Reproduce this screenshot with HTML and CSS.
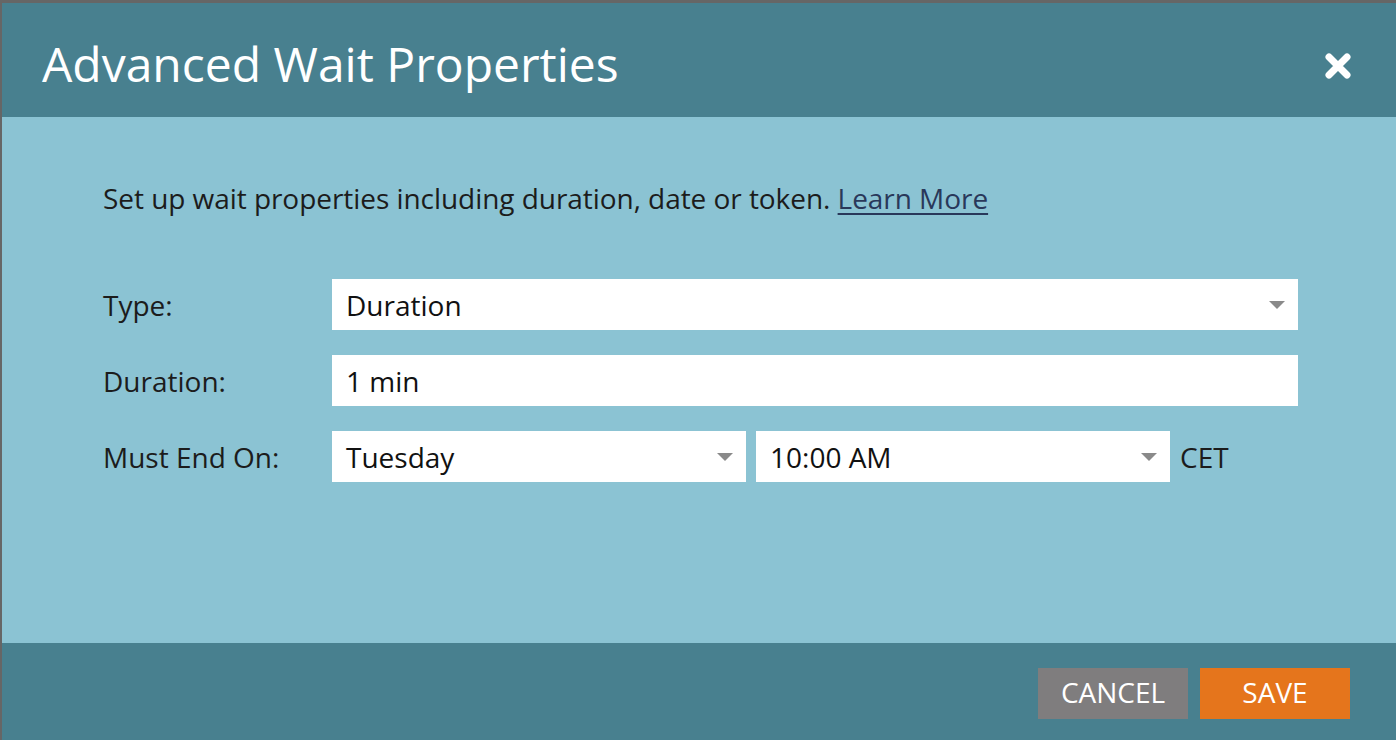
FILE: index.html
```html
<!DOCTYPE html>
<html>
<head>
<meta charset="utf-8">
<link rel="stylesheet" href="styles.css">
</head>
<body>
<div class="dialog">
  <header class="header">
    <h1 class="title">Advanced Wait Properties</h1>
    <button class="close" aria-label="Close">
      <svg width="30" height="30" viewBox="0 0 30 30"><path d="M6 6 L24 24 M24 6 L6 24" stroke="#fff" stroke-width="7" stroke-linecap="round"/></svg>
    </button>
  </header>
  <main class="body">
    <p class="intro">Set up wait properties including duration, date or token. <a href="#" class="link">Learn More</a></p>
    <div class="form">
      <div class="row">
        <label class="label">Type:</label>
        <div class="field select wide"><span>Duration</span><i class="arrow"></i></div>
      </div>
      <div class="row">
        <label class="label">Duration:</label>
        <div class="field wide"><span>1 min</span></div>
      </div>
      <div class="row">
        <label class="label">Must End On:</label>
        <div class="field select half"><span>Tuesday</span><i class="arrow"></i></div>
        <div class="field select half"><span>10:00 AM</span><i class="arrow"></i></div>
        <span class="tz">CET</span>
      </div>
    </div>
  </main>
  <footer class="footer">
    <button class="btn cancel">CANCEL</button>
    <button class="btn save">SAVE</button>
  </footer>
</div>
</body>
</html>
```
FILE: styles.css
```css
html, body { margin: 0; padding: 0; }
body {
  background: #666666;
  width: 1396px;
  height: 740px;
  overflow: hidden;
  font-family: "Open Sans", "Noto Sans", sans-serif;
}
.dialog {
  margin: 3px 0 0 2px;
  height: 737px;
  display: flex;
  flex-direction: column;
  background: #8bc3d3;
}
.header {
  height: 114px;
  background: #48808f;
  display: flex;
  align-items: center;
  justify-content: space-between;
  padding: 6px 43px 0 40px;
  box-sizing: border-box;
}
.title {
  margin: 0;
  font-weight: 400;
  font-size: 48px;
  color: #ffffff;
}
.close {
  background: none;
  border: 0;
  padding: 0;
  width: 30px;
  height: 30px;
  display: flex;
  margin-top: 6px;
}
.body {
  flex: 1;
  padding: 62px 98px 0 101px;
  box-sizing: border-box;
}
.intro {
  margin: 0 0 62px 0;
  font-size: 28px;
  color: #1c1c1c;
  line-height: 38px;
  letter-spacing: -0.05px;
}
.link {
  color: #29385a;
  text-decoration: underline;
  text-decoration-thickness: 2px;
  text-underline-offset: 4px;
}
.form {
  display: flex;
  flex-direction: column;
  gap: 25px;
}
.row {
  display: flex;
  align-items: center;
  gap: 10px;
}
.label {
  width: 219px;
  font-size: 28px;
  color: #1c1c1c;
}
.field {
  height: 51px;
  background: #ffffff;
  display: flex;
  align-items: center;
  justify-content: space-between;
  padding: 0 13px 0 14px;
  box-sizing: border-box;
  font-size: 28px;
  color: #111;
}
.wide { width: 966px; }
.half { width: 414px; }
.arrow {
  width: 0; height: 0;
  border-left: 8px solid transparent;
  border-right: 8px solid transparent;
  border-top: 8px solid #8a8a8a;
}
.tz { font-size: 28px; color: #1c1c1c; }
.footer {
  height: 97px;
  background: #48808f;
  display: flex;
  align-items: center;
  justify-content: flex-end;
  gap: 12px;
  padding: 4px 46px 0 0;
  box-sizing: border-box;
}
.btn {
  width: 150px;
  height: 51px;
  border: 0;
  color: #fff;
  font-family: "Open Sans", sans-serif;
  font-size: 28px;
  padding: 0 0 3px 0;
}
.cancel { background: #7f7d7e; }
.save { background: #e5751c; }
```
